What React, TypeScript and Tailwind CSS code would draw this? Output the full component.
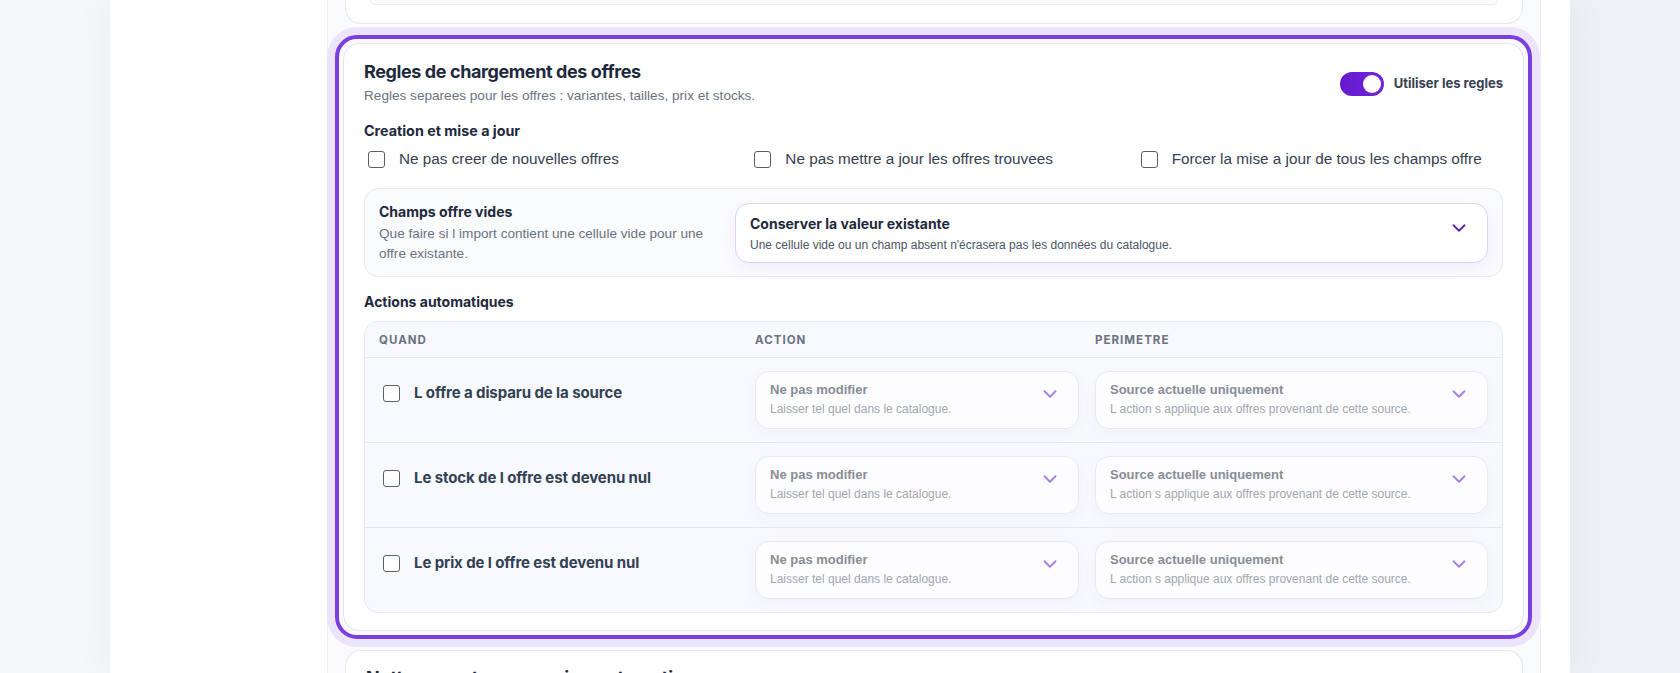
import { ChevronDown } from 'lucide-react';

const inter = 'font-["Inter","Liberation_Sans",sans-serif]';
const sans = 'font-["Liberation_Sans","Arial",sans-serif]';

const creationOptions = [
  'Ne pas creer de nouvelles offres',
  'Ne pas mettre a jour les offres trouvees',
  'Forcer la mise a jour de tous les champs offre',
];

const actionRows = [
  'L offre a disparu de la source',
  'Le stock de l offre est devenu nul',
  'Le prix de l offre est devenu nul',
];

function Checkbox() {
  return <span className="w-[17px] h-[17px] shrink-0 rounded-[3px] border border-[#5b5f66] bg-white" />;
}

function RuleSelect({ title, hint }: { title: string; hint: string }) {
  return (
    <div className="flex items-start justify-between rounded-[14px] border border-[#ebe8f3] bg-[#fdfdff] pl-[14px] pr-[17px] pt-[9px] pb-[11px] shadow-[0_6px_14px_rgba(99,102,241,0.04)]">
      <div className="min-w-0">
        <div className={`${sans} text-[13px] leading-[18px] font-bold text-[#888c96]`}>{title}</div>
        <div className={`${sans} mt-[2px] text-[12px] leading-4 text-[#a2a6ae]`}>{hint}</div>
      </div>
      <ChevronDown size={22} strokeWidth={2} className="mt-[2px] shrink-0 text-[#a47fe2]" />
    </div>
  );
}

export default function App() {
  return (
    <div className="h-[673px] overflow-hidden bg-gradient-to-r from-[#f6f7f9] to-[#eef1f3]">
      <div className="ml-[110px] w-[1460px] h-full flex bg-white shadow-[0_0_40px_rgba(15,23,42,0.05)]">
        <aside className="w-[217px] shrink-0" />

        <main className="flex-1 mr-[29px] h-full border-x border-[#eceef3] bg-[#fafbfc] pl-[17px] pr-[17px] flex flex-col">
          {/* previous section, scrolled mostly out of view */}
          <div className="h-[24px] shrink-0 rounded-b-2xl border-x border-b border-[#e8e6ef] bg-white">
            <div className="mx-[24px] h-[5px] rounded-b-xl border-x border-b border-[#e9e9ee] bg-[#fafbfc]" />
          </div>

          {/* highlighted section */}
          <div className="mt-[11px] -ml-[10px] -mr-[9px] shrink-0 rounded-[22px] border-4 border-[#7b3fe0] p-1 shadow-[0_0_0_8px_#ece4fc]">
            <section className="rounded-2xl border border-[#e6e4ee] bg-white px-5 pt-[17px] pb-[17px]">
              <div className="flex items-start justify-between">
                <div>
                  <h2 className={`${inter} text-[18px] leading-[22px] font-bold tracking-[-0.4px] text-[#1e293b]`}>
                    Regles de chargement des offres
                  </h2>
                  <p className={`${sans} mt-1 text-[13.6px] leading-[18px] text-[#6b7280]`}>
                    Regles separees pour les offres : variantes, tailles, prix et stocks.
                  </p>
                </div>
                <div className="mt-[11px] flex items-center gap-[10px]">
                  <span className="w-[44px] h-[24px] rounded-full bg-gradient-to-r from-[#6419cf] to-[#7424d6] flex items-center justify-end px-[3px]">
                    <span className="w-[18px] h-[18px] rounded-full bg-white" />
                  </span>
                  <span className={`${inter} text-[13px] font-bold text-[#374151]`}>Utiliser les regles</span>
                </div>
              </div>

              <h3 className={`${inter} mt-4 text-[14.3px] leading-5 font-bold text-[#1e293b]`}>
                Creation et mise a jour
              </h3>
              <div className="mt-[7px] grid grid-cols-3 gap-5">
                {creationOptions.map((label) => (
                  <label key={label} className="flex items-center gap-[14px] px-1">
                    <Checkbox />
                    <span className={`${sans} text-[15.3px] leading-[22px] text-[#374151]`}>{label}</span>
                  </label>
                ))}
              </div>

              <div className="mt-[18px] grid grid-cols-[340px_1fr] items-center gap-4 rounded-[14px] border border-[#e8e8ef] bg-[#fafbfd] pl-[14px] pr-[14px] py-[13px]">
                <div>
                  <div className={`${inter} text-[14px] leading-5 font-bold text-[#1e293b]`}>Champs offre vides</div>
                  <div className={`${sans} mt-[2px] max-w-[336px] text-[13.6px] leading-[19.5px] text-[#6b7280]`}>
                    Que faire si l import contient une cellule vide pour une offre existante.
                  </div>
                </div>
                <div className="flex items-start justify-between rounded-[14px] border border-[#dcd2f1] bg-white pl-[14px] pr-[17px] pt-[10px] pb-[9px] shadow-[0_6px_16px_rgba(124,58,237,0.07)]">
                  <div>
                    <div className={`${inter} text-[14px] leading-5 font-bold text-[#1e293b]`}>
                      Conserver la valeur existante
                    </div>
                    <div className={`${sans} mt-[3px] text-[12px] leading-4 text-[#4b5563]`}>
                      Une cellule vide ou un champ absent n'écrasera pas les données du catalogue.
                    </div>
                  </div>
                  <ChevronDown size={22} strokeWidth={2} className="mt-[3px] shrink-0 text-[#5b21b6]" />
                </div>
              </div>

              <h3 className={`${inter} mt-[15px] text-[14px] leading-5 font-bold text-[#1e293b]`}>
                Actions automatiques
              </h3>
              <div className="mt-[9px] rounded-[14px] border border-[#e8e8ef] bg-[#f8f9fc] overflow-hidden">
                <div
                  className={`${inter} grid grid-cols-[360px_324px_1fr] gap-4 border-b border-[#e6e7ee] px-[14px] pt-[10px] pb-[9px] text-[11.5px] leading-4 font-bold tracking-[0.09em] text-[#6b7280]`}
                >
                  <span>QUAND</span>
                  <span>ACTION</span>
                  <span>PERIMETRE</span>
                </div>
                {actionRows.map((label, i) => (
                  <div
                    key={label}
                    className={`grid grid-cols-[360px_324px_1fr] gap-4 px-[14px] py-[13px] ${
                      i < actionRows.length - 1 ? 'border-b border-[#e6e7ee]' : ''
                    }`}
                  >
                    <label className="flex items-center gap-[14px] pl-1 pt-3 self-start">
                      <Checkbox />
                      <span className={`${inter} text-[15px] leading-5 font-bold tracking-[-0.1px] text-[#334155]`}>
                        {label}
                      </span>
                    </label>
                    <RuleSelect title="Ne pas modifier" hint="Laisser tel quel dans le catalogue." />
                    <RuleSelect
                      title="Source actuelle uniquement"
                      hint="L action s applique aux offres provenant de cette source."
                    />
                  </div>
                ))}
              </div>
            </section>
          </div>

          {/* next section, only its top edge is visible */}
          <div className="mt-[11px] h-[60px] shrink-0 rounded-t-2xl border-x border-t border-[#e8e6ef] bg-white px-5 pt-[16px]">
            <h2 className={`${inter} text-[18px] leading-[22px] font-bold text-[#1e293b]`}>
              Nettoyage et suppression automatique
            </h2>
          </div>
        </main>
      </div>
    </div>
  );
}
